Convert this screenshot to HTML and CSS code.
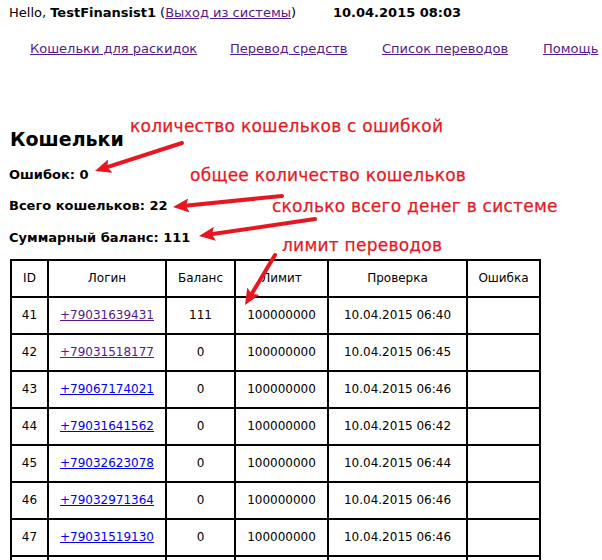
FILE: index.html
```html
<!DOCTYPE html>
<html lang="ru">
<head>
<meta charset="utf-8">
<title>Кошельки</title>
<link rel="stylesheet" href="styles.css">
</head>
<body>
<div class="topbar">
  <div class="greet">Hello, <b>TestFinansist1</b> (<a class="visited" href="#">Выход из системы</a>)</div>
  <div class="now">10.04.2015 08:03</div>
</div>
<nav class="menu">
  <a class="visited" href="#">Кошельки для раскидок</a>
  <a class="visited" href="#">Перевод средств</a>
  <a class="visited" href="#">Список переводов</a>
  <a class="visited" href="#">Помощь</a>
</nav>
<h1 class="title">Кошельки</h1>
<p class="stat">Ошибок: 0</p>
<p class="stat">Всего кошельков: 22</p>
<p class="stat stat-last">Суммарный баланс: 111</p>
<table class="wallets">
  <thead>
    <tr><th class="c-id">ID</th><th class="c-login">Логин</th><th class="c-bal">Баланс</th><th class="c-lim">Лимит</th><th class="c-chk">Проверка</th><th class="c-err">Ошибка</th></tr>
  </thead>
  <tbody>
    <tr><td>41</td><td><a class="visited" href="#">+79031639431</a></td><td>111</td><td>100000000</td><td>10.04.2015 06:40</td><td></td></tr>
    <tr><td>42</td><td><a class="visited" href="#">+79031518177</a></td><td>0</td><td>100000000</td><td>10.04.2015 06:45</td><td></td></tr>
    <tr><td>43</td><td><a href="#">+79067174021</a></td><td>0</td><td>100000000</td><td>10.04.2015 06:46</td><td></td></tr>
    <tr><td>44</td><td><a href="#">+79031641562</a></td><td>0</td><td>100000000</td><td>10.04.2015 06:42</td><td></td></tr>
    <tr><td>45</td><td><a href="#">+79032623078</a></td><td>0</td><td>100000000</td><td>10.04.2015 06:44</td><td></td></tr>
    <tr><td>46</td><td><a href="#">+79032971364</a></td><td>0</td><td>100000000</td><td>10.04.2015 06:46</td><td></td></tr>
    <tr><td>47</td><td><a href="#">+79031519130</a></td><td>0</td><td>100000000</td><td>10.04.2015 06:46</td><td></td></tr>
    <tr class="cut"><td></td><td></td><td></td><td></td><td></td><td></td></tr>
  </tbody>
</table>

<div class="note note-1">количество кошельков с ошибкой</div>
<div class="note note-2">общее количество кошельков</div>
<div class="note note-3">сколько всего денег в системе</div>
<div class="note note-4">лимит переводов</div>

<svg class="arrows" width="602" height="560" viewBox="0 0 602 560" aria-hidden="true">
  <defs>
    <marker id="head" markerUnits="userSpaceOnUse" markerWidth="17" markerHeight="14" refX="4" refY="7" orient="auto">
      <path d="M0,0 L16,7 L0,14 L3,7 z" fill="#e8171f"/>
    </marker>
  </defs>
  <g stroke="#e8171f" stroke-width="4" stroke-linecap="round" fill="none">
    <line x1="182" y1="143" x2="106.4" y2="167.3" marker-end="url(#head)"/>
    <line x1="282" y1="196" x2="184.9" y2="205.8" marker-end="url(#head)"/>
    <line x1="315" y1="219" x2="210.9" y2="234.3" marker-end="url(#head)"/>
    <line x1="275" y1="255" x2="251.2" y2="294.7" marker-end="url(#head)"/>
  </g>
</svg>
</body>
</html>
```
FILE: styles.css
```css
html, body {
  margin: 0;
  padding: 0;
  background: #fff;
}
body {
  padding: 5px 9px 0 9px;
  font-family: "DejaVu Sans", Verdana, sans-serif;
  font-size: 12px;
  line-height: 15px;
  color: #000;
  position: relative;
}
a {
  color: #0000ee;
  text-decoration: underline;
}
a.visited {
  color: #551a8b;
}
.topbar {
  display: grid;
  grid-template-columns: 324px auto;
  font-size: 13px;
  line-height: 16px;
}
.now {
  font-weight: bold;
}
.menu {
  display: grid;
  grid-template-columns: 200px 152px 161px auto;
  margin-top: 20px;
  padding-left: 21px;
  font-size: 13px;
  line-height: 16px;
}
.menu a {
  justify-self: start;
}
.title {
  font-size: 19px;
  line-height: 23px;
  font-weight: bold;
  margin: 71px 0 0 1px;
}
.stat {
  font-size: 13px;
  font-weight: bold;
  margin: 16px 0 0 0;
}
.stat-last {
  margin-top: 17px;
}
.wallets {
  margin-top: 14px;
  margin-left: 1px;
  border-collapse: collapse;
  table-layout: fixed;
}
.wallets th,
.wallets td {
  border: 2px solid #000;
  padding: 10px 0;
  text-align: center;
  font-weight: normal;
  line-height: 15px;
  height: 15px;
}
.c-id { width: 35px; }
.c-login { width: 116px; }
.c-bal { width: 67px; }
.c-lim { width: 91px; }
.c-chk { width: 137px; }
.c-err { width: 71px; }

.note {
  position: absolute;
  font-size: 17px;
  line-height: 17px;
  letter-spacing: 0.25px;
  color: #e8171f;
  -webkit-text-stroke: 0.25px #e8171f;
  white-space: nowrap;
}
.note-1 { left: 130px; top: 118px; }
.note-2 { left: 190px; top: 167px; }
.note-3 { left: 272px; top: 198px; }
.note-4 { left: 282px; top: 237px; }

.arrows {
  position: absolute;
  left: 0;
  top: 0;
  pointer-events: none;
}
```
